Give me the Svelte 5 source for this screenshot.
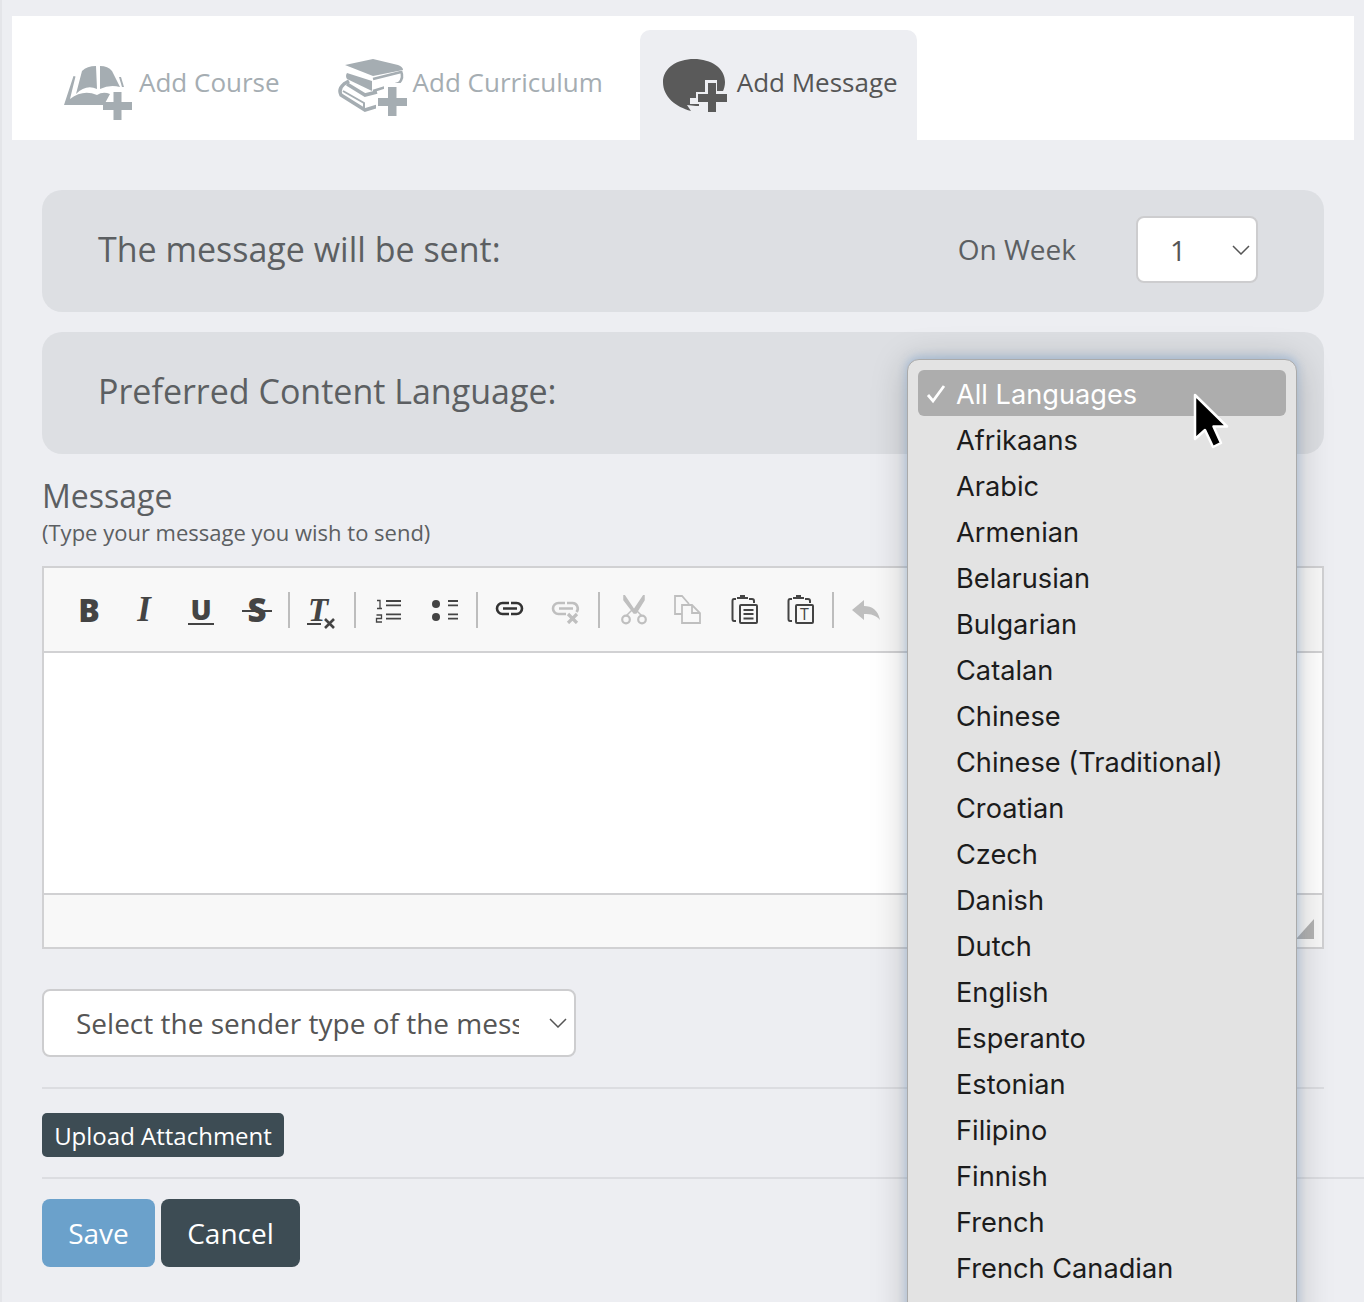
<script>
  const languages = ['Afrikaans','Arabic','Armenian','Belarusian','Bulgarian','Catalan','Chinese','Chinese (Traditional)','Croatian','Czech','Danish','Dutch','English','Esperanto','Estonian','Filipino','Finnish','French','French Canadian'];
</script>

<div class="page">
  <nav class="tabs">
    <div class="tab first">
      <svg width="70" height="58" viewBox="63 64 70 58" aria-hidden="true">
        <path d="M82 71Q87 66 96 66L97 89Q86 84 76 94Z" fill="#a5adb2"/>
        <path d="M100 66Q108 66 112 71L120 87Q110 84 100 89Z" fill="#a5adb2"/>
        <path d="M73.500 76L75.500 76.500L70 99Q83 89 97 95Q103 91 110 94L104 105L64 105Z" fill="#a5adb2"/>
        <path d="M119 77L121 77L124 87L122 87Z" fill="#a5adb2"/>
        <path d="M113.500 92h8v10h10.500v8h-10.500v10h-8v-10h-10.500v-8h10.500z" fill="#a5adb2"/>
      </svg>
      <span>Add Course</span>
    </div>
    <div class="tab second">
      <svg width="70" height="58" viewBox="338 59 70 58" aria-hidden="true">
        <path d="M345 65L373 59L398 65Q403 67 403 70L373 76Z" fill="#a5adb2"/>
        <path d="M347 73L372 81V91L347 79Q345 76 347 73Z" fill="#a5adb2"/>
        <path d="M373 79L401 72M401 71Q404 78 399 83L373 91" fill="none" stroke="#a5adb2" stroke-width="2.500"/>
        <path d="M349 81L344 84Q338 89 341 95L365 110L378 106" fill="none" stroke="#a5adb2" stroke-width="3.500"/>
        <path d="M347 84L365 95L377 92" fill="none" stroke="#a5adb2" stroke-width="3.500"/>
        <path d="M343 91L364 103V109" fill="none" stroke="#a5adb2" stroke-width="2"/>
        <path d="M384 83h17v11h8v16h-8v8h-17v-8h-8v-16h8z" fill="#fff"/>
        <path d="M388 87h8.500v11h10.500v8h-10.500v10h-8.500v-10h-10v-8h10z" fill="#a5adb2"/>
      </svg>
      <span>Add Curriculum</span>
    </div>
    <div class="tab active">
      <svg width="66" height="56" viewBox="662 58 66 56" aria-hidden="true">
        <path d="M694 59C711 59 725 68 725 82C725 97 711 106 696 106L687 105L691 111C676 107 663 97 663 82C663 68 677 59 694 59Z" fill="#5a5a5a"/>
        <path d="M705 80h12v11h11v15h-29v-2h-9v-6h6v-6h9z" fill="#edeef2"/>
        <path d="M708 83h8v11h11v8h-11v10h-8v-10h-10v-8h10z" fill="#5a5a5a"/>
      </svg>
      <span>Add Message</span>
    </div>
  </nav>

  <main class="content">
    <section class="panel week">
      <h2>The message will be sent:</h2>
      <div class="week-pick">
        <span class="on-week">On Week</span>
        <div class="select small">
          <span>1</span>
          <svg width="18" height="10" viewBox="0 0 18 10" aria-hidden="true"><path d="M1 1l8 8 8-8" fill="none" stroke="#555" stroke-width="1.500"/></svg>
        </div>
      </div>
    </section>

    <section class="panel lang">
      <h2>Preferred Content Language:</h2>
    </section>

    <div class="msg-label">Message</div>
    <div class="msg-hint">(Type your message you wish to send)</div>

    <div class="editor">
      <div class="toolbar">
        <span class="btn"><b class="g-b">B</b></span>
        <span class="btn"><i class="g-i">I</i></span>
        <span class="btn"><b class="g-u">U</b></span>
        <span class="btn"><b class="g-s">S</b></span>
        <span class="sep"></span>
        <span class="btn">
          <span class="g-t">T</span>
          <svg class="tx-x" width="13" height="13" viewBox="0 0 13 13" aria-hidden="true"><path d="M2 2l9 9M11 2l-9 9" stroke="#444" stroke-width="2.600"/></svg>
        </span>
        <span class="sep"></span>
        <span class="btn">
          <svg width="28" height="28" viewBox="0 0 28 28" aria-hidden="true">
            <path d="M3 4.500h3v8M3 12.500h5M2.500 19h5v3.500h-5v3.500h5.500" fill="none" stroke="#444" stroke-width="1.300"/>
            <path d="M12 5h15M12 9.300h15M12 18.300h15M12 22.700h15" stroke="#444" stroke-width="1.800"/>
          </svg>
        </span>
        <span class="btn">
          <svg width="28" height="28" viewBox="0 0 28 28" aria-hidden="true">
            <circle cx="6" cy="8" r="4" fill="#444"/><circle cx="6" cy="21" r="4" fill="#444"/>
            <path d="M18 5h10M18 9.300h10M18 18.300h10M18 22.700h10" stroke="#444" stroke-width="1.800"/>
          </svg>
        </span>
        <span class="sep"></span>
        <span class="btn">
          <svg width="30" height="28" viewBox="0 0 30 28" aria-hidden="true">
            <path d="M14 7H7.500a5.500 5.500 0 0 0 0 11H14M16 7h5.500a5.500 5.500 0 0 1 0 11H16M8 12.500h14" fill="none" stroke="#333" stroke-width="2.600"/>
          </svg>
        </span>
        <span class="btn">
          <svg width="30" height="28" viewBox="0 0 30 28" aria-hidden="true">
            <path d="M14 7H7.500a5.500 5.500 0 0 0 0 11H15M16 7h5.500a5.500 5.500 0 0 1 4 9M8 12.500h14" fill="none" stroke="#bfbfbf" stroke-width="2.600"/>
            <path d="M17 18l9 9M26 18l-9 9" stroke="#bfbfbf" stroke-width="3.200"/>
          </svg>
        </span>
        <span class="sep"></span>
        <span class="btn shift">
          <svg width="28" height="30" viewBox="0 0 28 30" aria-hidden="true">
            <path d="M4 0l10 15 10-15v5L16 18l-2 0L4 5Z M13 14L6 21M15 14l7 7" fill="#bfbfbf" stroke="#bfbfbf" stroke-width="1.500"/>
            <circle cx="6" cy="24.500" r="3.800" fill="none" stroke="#bfbfbf" stroke-width="2.200"/>
            <circle cx="22" cy="24.500" r="3.800" fill="none" stroke="#bfbfbf" stroke-width="2.200"/>
          </svg>
        </span>
        <span class="btn">
          <svg width="28" height="30" viewBox="0 0 28 30" aria-hidden="true">
            <path d="M8 19H1V1h7l7 8M8 10h10l8 8v10H8ZM18 10v8h8" fill="none" stroke="#bfbfbf" stroke-width="1.800"/>
          </svg>
        </span>
        <span class="btn">
          <svg width="28" height="32" viewBox="0 0 28 32" aria-hidden="true">
            <path d="M6 5H4Q2.500 5 2.500 7V25Q2.500 27 4 27H6M19 5H22Q24 5 24 7V9" fill="none" stroke="#444" stroke-width="2"/>
            <path d="M7 5V3H10V1H15V3H18V5Z" fill="#444"/>
            <rect x="10" y="11" width="17" height="18" rx="1" fill="none" stroke="#444" stroke-width="2"/>
            <path d="M13.500 16h10M13.500 20h10M13.500 24.500h10" stroke="#444" stroke-width="1.800"/>
          </svg>
        </span>
        <span class="btn">
          <svg width="28" height="32" viewBox="0 0 28 32" aria-hidden="true">
            <path d="M6 5H4Q2.500 5 2.500 7V25Q2.500 27 4 27H6M19 5H22Q24 5 24 7V9" fill="none" stroke="#444" stroke-width="2"/>
            <path d="M7 5V3H10V1H15V3H18V5Z" fill="#444"/>
            <rect x="10" y="11" width="17" height="18" rx="1" fill="none" stroke="#444" stroke-width="2"/>
            <text x="18.500" y="26" text-anchor="middle" class="svg-t">T</text>
          </svg>
        </span>
        <span class="sep"></span>
        <span class="btn">
          <svg width="30" height="24" viewBox="0 0 30 24" aria-hidden="true">
            <path d="M1 12L13 2V8C21 8 27 12 29 22C25 17 20 16 13 16V22Z" fill="#bfbfbf"/>
          </svg>
        </span>
      </div>
      <div class="editable"></div>
      <div class="foot"><span class="resize"></span></div>
    </div>

    <div class="select sender">
      <span class="clip">Select the sender type of the message</span>
      <svg width="18" height="10" viewBox="0 0 18 10" aria-hidden="true"><path d="M1 1l8 8 8-8" fill="none" stroke="#555" stroke-width="1.500"/></svg>
    </div>

    <hr class="rule one" />
    <button class="upload">Upload Attachment</button>
    <hr class="rule two" />

    <div class="actions">
      <button class="save">Save</button>
      <button class="cancel">Cancel</button>
    </div>
  </main>

  <div class="menu">
    <div class="item selected">
      <svg class="check" width="20" height="20" viewBox="0 0 20 20" aria-hidden="true"><path d="M2 11l5 6L18 2" fill="none" stroke="#fff" stroke-width="2.800"/></svg>
      All Languages
    </div>
    {#each languages as l}
      <div class="item">{l}</div>
    {/each}
    <svg class="cursor" width="38" height="60" viewBox="0 0 38 60" aria-hidden="true">
      <path d="M2 2V46L12 37L20 54L28 50L20.500 33.500H34Z" fill="#000" stroke="#fff" stroke-width="2.500" stroke-linejoin="round"/>
    </svg>
  </div>
</div>

<style>
  :global(body) {
    margin: 0;
    background: #edeef2;
  }
  .page {
    position: relative;
    box-sizing: border-box;
    height: 1302px;
    overflow: hidden;
    padding: 16px 10px 0;
    border-left: 2px solid #e4e5e9;
    font-family: "Open Sans", sans-serif;
    color: #5c5f62;
  }
  .tabs {
    display: flex;
    align-items: flex-end;
    gap: 17px;
    height: 124px;
    padding-left: 32px;
    background: #fff;
  }
  .tab {
    display: flex;
    box-sizing: border-box;
    height: 110px;
    padding: 0 20px;
    border-radius: 10px 10px 0 0;
    font-size: 26px;
    color: #a5adb2;
    align-items: flex-start;
  }
  .tab span { padding-top: 34px; line-height: 36px; }
  .tab svg { display: block; flex: none; }
  .tab.first { padding-right: 22px; }
  .tab.first svg { margin: 34px 6px 0 -1px; }
  .tab.second svg { margin: 29px 5px 0 -1px; }
  .tab.active {
    padding-right: 19px;
    background: #edeef2;
    color: #555;
  }
  .tab.active svg { margin: 28px 9px 0 2px; }
  .content { padding: 50px 30px 0; }
  .panel {
    display: flex;
    align-items: center;
    justify-content: space-between;
    box-sizing: border-box;
    height: 122px;
    padding: 0 66px 4px 56px;
    border-radius: 20px;
    background: #dddfe3;
    margin-bottom: 20px;
  }
  .panel h2 {
    margin: 0;
    font-size: 34px;
    font-weight: 400;
    line-height: 44px;
  }
  .week-pick {
    display: flex;
    align-items: center;
    gap: 60px;
  }
  .on-week { font-size: 28px; }
  .select {
    display: flex;
    align-items: center;
    box-sizing: border-box;
    background: #fff;
    border: 2px solid #cdcdcf;
    border-radius: 8px;
    color: #555;
  }
  .select.small {
    width: 122px;
    height: 67px;
    padding: 2px 6px 0 32px;
    justify-content: space-between;
    font-size: 28px;
  }
  .msg-label {
    padding-top: 1px;
    font-size: 32px;
    line-height: 41px;
  }
  .msg-hint {
    font-size: 22px;
    line-height: 32px;
    margin-bottom: 18px;
  }
  .editor {
    box-sizing: border-box;
    height: 383px;
    border: 2px solid #d1d1d3;
    display: flex;
    flex-direction: column;
    background: #f8f8f8;
  }
  .toolbar {
    display: flex;
    align-items: center;
    box-sizing: border-box;
    height: 85px;
    padding-left: 16px;
    border-bottom: 2px solid #d1d1d3;
    color: #444;
  }
  .btn {
    position: relative;
    display: flex;
    align-items: center;
    justify-content: center;
    width: 56px;
    height: 40px;
    flex: none;
  }
  .btn.shift { left: 2px; }
  .sep {
    flex: none;
    width: 2px;
    height: 36px;
    margin: 0 4px;
    background: #bdbdbd;
  }
  .g-b, .g-u, .g-s {
    font-family: "Open Sans", sans-serif;
    font-weight: 800;
    font-size: 32px;
    line-height: 40px;
  }
  .g-b { margin-left: 2px; }
  .g-u {
    font-size: 28px;
    line-height: 28px;
    padding: 0 2px;
    border-bottom: 2px solid #444;
    margin-left: 2px;
  }
  .g-s {
    position: relative;
    font-size: 33px;
    margin-left: 2px;
  }
  .g-s::after {
    content: "";
    position: absolute;
    left: -5px;
    right: -5px;
    top: 20px;
    height: 2px;
    background: #444;
  }
  .g-i, .g-t {
    font-family: "Liberation Serif", serif;
    font-style: italic;
    font-weight: 700;
    font-size: 35px;
    line-height: 40px;
  }
  .g-t {
    position: relative;
    font-size: 33px;
    line-height: 30px;
    margin-left: -8px;
  }
  .g-t::after {
    content: "";
    position: absolute;
    left: -1px;
    width: 14px;
    bottom: 0;
    height: 2px;
    background: #444;
  }
  .tx-x { position: absolute; left: 29px; bottom: 0; }
  .svg-t {
    font-family: "Open Sans", sans-serif;
    font-size: 16px;
    font-weight: 400;
    fill: #444;
  }
  .editable {
    height: 240px;
    flex: none;
    background: #fff;
    border-bottom: 2px solid #d1d1d3;
  }
  .foot { position: relative; flex: 1; }
  .resize {
    position: absolute;
    right: 8px;
    bottom: 8px;
    width: 18px;
    height: 20px;
    background: #b3b3b3;
    clip-path: polygon(100% 0, 100% 100%, 0 100%);
  }
  .select.sender {
    margin-top: 40px;
    width: 534px;
    height: 68px;
    padding: 0 7px 0 32px;
    justify-content: space-between;
    font-size: 28px;
  }
  .clip {
    display: block;
    width: 443px;
    overflow: hidden;
    white-space: nowrap;
  }
  .rule {
    border: 0;
    height: 2px;
    background: #dcdde1;
    margin: 30px 0 0;
  }
  .rule.two { margin: 20px -40px 0 0; }
  button {
    border: 0;
    color: #fff;
    font-family: "Open Sans", sans-serif;
    cursor: pointer;
  }
  .upload {
    display: block;
    margin-top: 24px;
    width: 242px;
    height: 44px;
    padding: 0;
    border-radius: 5px;
    background: #3d4c54;
    font-size: 24px;
  }
  .actions {
    display: flex;
    gap: 6px;
    margin-top: 20px;
  }
  .save, .cancel {
    height: 68px;
    padding: 0;
    border-radius: 8px;
    font-size: 28px;
  }
  .save { width: 113px; background: #6ba1cb; }
  .cancel { width: 139px; background: #3d4c54; }
  .menu {
    position: absolute;
    left: 905px;
    top: 359px;
    box-sizing: border-box;
    width: 390px;
    height: 1000px;
    padding: 10px;
    background: #e3e3e3;
    border: 1px solid #aaa;
    border-radius: 12px;
    box-shadow: 0 -2px 10px rgba(110, 160, 215, .45), 0 4px 36px rgba(0, 0, 0, .22);
    font-family: Inter, sans-serif;
    font-size: 27.200px;
    color: #1c1c1c;
  }
  .item {
    position: relative;
    box-sizing: border-box;
    height: 46px;
    line-height: 49px;
    padding-left: 38px;
    white-space: nowrap;
  }
  .item.selected {
    border-radius: 6px;
    background: #adadad;
    color: #fff;
  }
  .check {
    position: absolute;
    left: 8px;
    top: 14px;
  }
  .cursor {
    position: absolute;
    left: 285px;
    top: 33px;
  }
</style>
